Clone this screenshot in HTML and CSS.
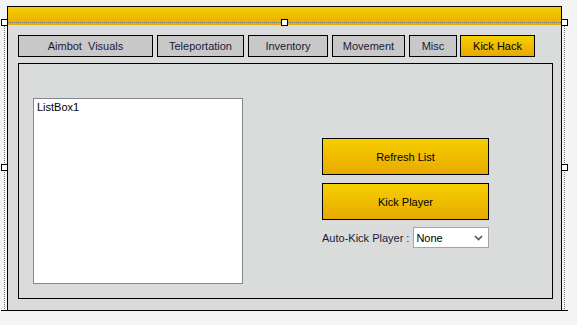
FILE: index.html
```html
<!DOCTYPE html>
<html lang="en">
<head>
    <meta charset="UTF-8">
    <meta name="viewport" content="width=device-width, initial-scale=1.0">
    <title>Form1</title>
    <link rel="stylesheet" href="styles.css">
</head>
<body>
    <div class="form">
        <div class="form-header"></div>
        <div class="form-body">
            <div class="tabs">
                <div class="tab" style="width: 135px">Aimbot&nbsp; Visuals</div>
                <div class="tab" style="width: 87px">Teleportation</div>
                <div class="tab" style="width: 80px">Inventory</div>
                <div class="tab" style="width: 73px">Movement</div>
                <div class="tab" style="width: 48px">Misc</div>
                <div class="tab tab-active" style="width: 75px">Kick Hack</div>
            </div>
            <div class="group">
                <div class="listbox">ListBox1</div>
                <div class="controls">
                    <div class="btn">Refresh List</div>
                    <div class="btn">Kick Player</div>
                    <div class="auto-kick">
                        <span>Auto-Kick Player :</span>
                        <div class="combo">
                            <span>None</span>
                            <svg width="9" height="6" viewBox="0 0 9 6"><path d="M1 1 L4.5 4.5 L8 1" fill="none" stroke="#555" stroke-width="1.6"/></svg>
                        </div>
                    </div>
                </div>
            </div>
        </div>

        <!-- designer selection frame -->
        <div class="selection"></div>
        <div class="handle" style="left: -7px; top: 12px"></div>
        <div class="handle" style="left: 273px; top: 12px"></div>
        <div class="handle" style="left: 553px; top: 12px"></div>
        <div class="handle" style="left: -7px; top: 157px"></div>
        <div class="handle" style="left: 553px; top: 157px"></div>
        <div class="handle" style="left: -7px; top: 303px"></div>
        <div class="handle" style="left: 273px; top: 303px"></div>
        <div class="handle" style="left: 553px; top: 303px"></div>
    </div>
</body>
</html>
```

FILE: styles.css
```css
body {
    margin: 0;
    background-color: #f4f4f4;
    font-family: "Liberation Sans", Arial, sans-serif;
    font-size: 11px;
    color: #000;
}
.form {
    position: relative;
    margin: 6px 0 0 7px;
    width: 553px;
    height: 303px;
    border: 1px solid #000;
    background-color: #dadbdb;
}
.form-header {
    height: 18px;
    background: linear-gradient(#f6cf00, #e8a900);
}
.form-body {
    padding: 10px 0 0 10px;
}
.tabs {
    display: flex;
    gap: 4px;
}
.tab {
    box-sizing: border-box;
    height: 22px;
    border: 1px solid #000;
    background-color: #c8c8c8;
    display: flex;
    align-items: center;
    justify-content: center;
    color: #1a1a33;
}
.tab-active {
    margin-left: -1px;
    background: linear-gradient(#f6cf00, #e8a900);
    color: #000;
}
.group {
    box-sizing: border-box;
    margin-top: 6px;
    width: 535px;
    height: 236px;
    border: 1px solid #000;
    display: flex;
}
.listbox {
    box-sizing: border-box;
    margin: 34px 0 0 14px;
    width: 210px;
    height: 186px;
    border: 1px solid #828790;
    background-color: #fff;
    padding: 2px 3px;
}
.controls {
    margin: 74px 0 0 79px;
    width: 167px;
}
.btn {
    box-sizing: border-box;
    height: 37px;
    margin-bottom: 8px;
    border: 1px solid #000;
    background: linear-gradient(#f6cf00, #e8a900);
    display: flex;
    align-items: center;
    justify-content: center;
}
.auto-kick {
    display: flex;
    align-items: center;
    justify-content: flex-end;
    gap: 4px;
    margin-top: -1px;
    white-space: nowrap;
    color: #1a1a33;
}
.combo {
    box-sizing: border-box;
    width: 76px;
    height: 21px;
    border: 1px solid #a5a5a5;
    background-color: #fff;
    display: flex;
    align-items: center;
    justify-content: space-between;
    padding: 0 5px 0 2px;
    color: #000;
}
.selection {
    position: absolute;
    left: -4px;
    top: 15px;
    width: 559px;
    height: 289px;
    border: 1px dotted #777;
    pointer-events: none;
}
.handle {
    position: absolute;
    box-sizing: border-box;
    width: 7px;
    height: 7px;
    border: 1px solid #000;
    background-color: #fff;
}
```
